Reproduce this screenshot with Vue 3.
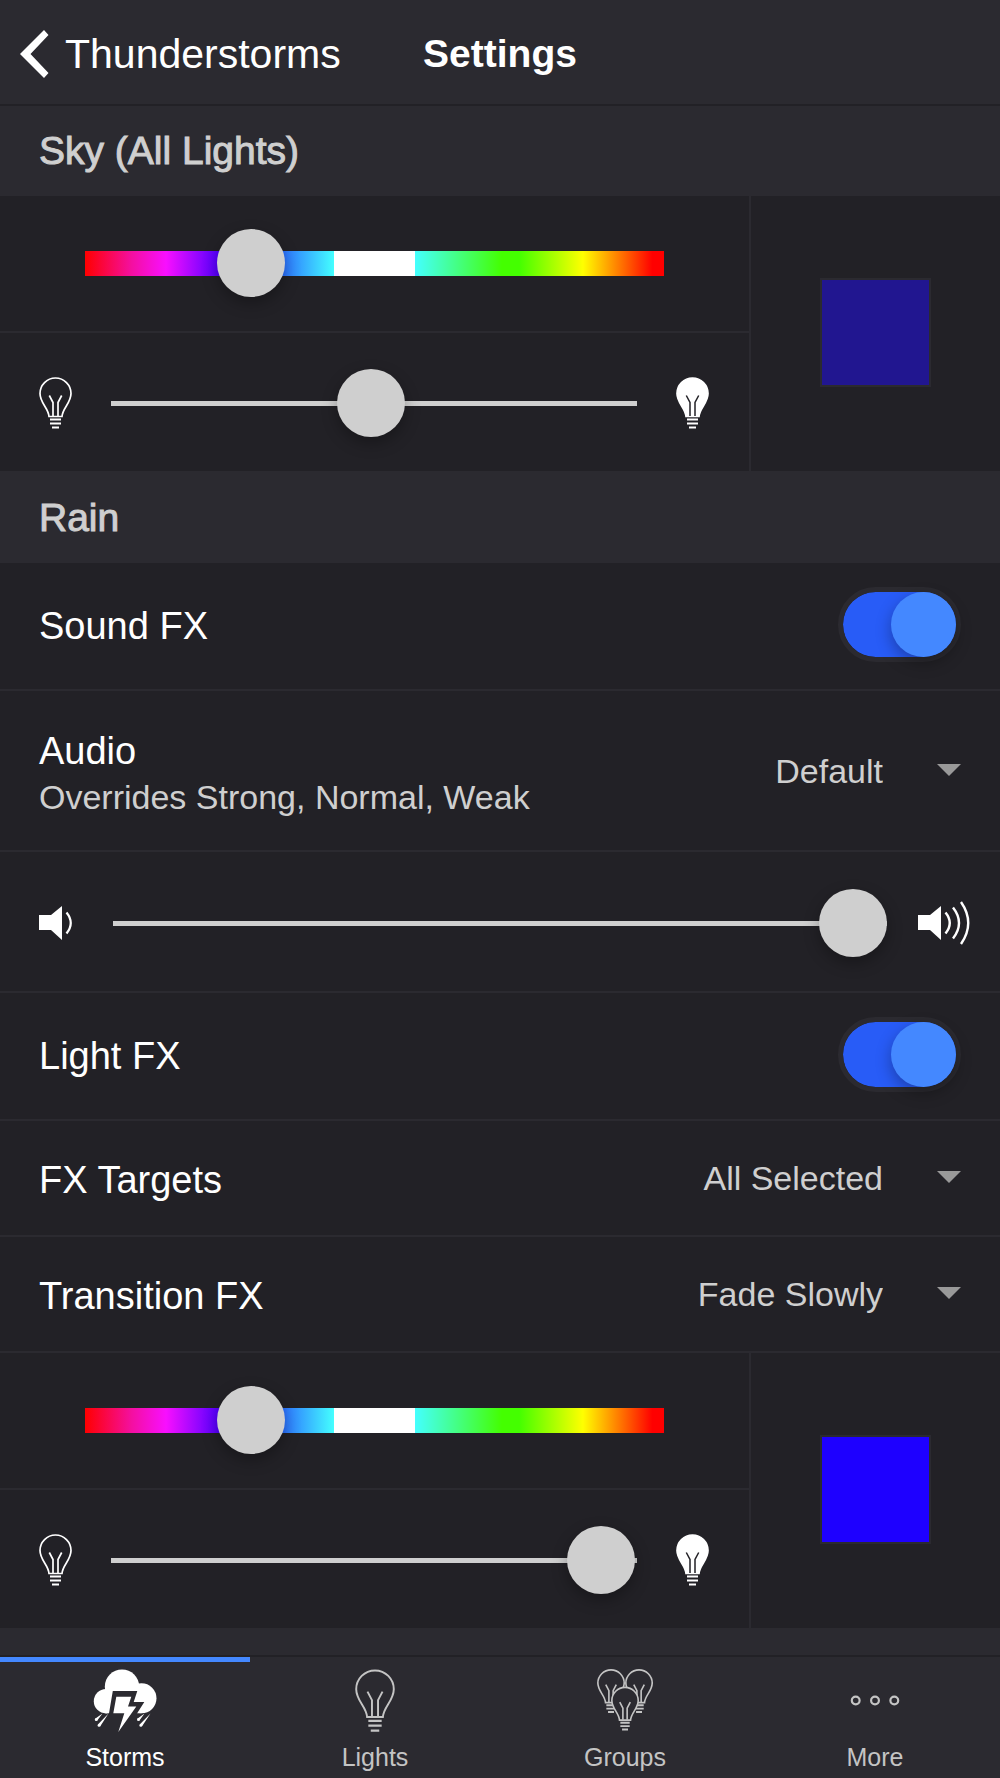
<script setup>
import { ref, reactive } from 'vue'

const BULB = 'M10 39.5C9.5 31 1 26 1 16.5A15.5 15.5 0 0 1 32 16.5C32 26 23.5 31 23 39.5Z'
const FILAMENT = 'M10.3 18.5L14 25.5V39M22.7 18.5L19 25.5V39'
const BASE = 'M11 42.6H22M11 46.6H22M13 50.6H20'

const sky = reactive({ hue: 25.8, level: 49.5, color: '#211690' })
const rain = reactive({ hue: 25.8, level: 99.6, color: '#1e00ff' })
const soundOn = ref(true)
const lightOn = ref(true)
const volume = ref(100)
const audio = ref('Default')
const targets = ref('All Selected')
const transition = ref('Fade Slowly')
const tab = ref('Storms')
const tabs = ['Storms', 'Lights', 'Groups', 'More']
</script>

<template>
  <div class="screen">
    <header class="bar">
      <button class="back" type="button">
        <svg width="29" height="48" viewBox="0 0 29 48" aria-hidden="true">
          <path d="M24 0L28.5 5L10.5 24L28.5 43L24 48L0 24Z" fill="#fff" />
        </svg>
        <span>Thunderstorms</span>
      </button>
      <h1>Settings</h1>
    </header>

    <main class="content">
      <h2 class="section">Sky (All Lights)</h2>
      <section class="panel">
        <div class="panel-controls">
          <div class="hue-row">
            <input v-model="sky.hue" class="slider hue" type="range" step="any" aria-label="Sky color" />
          </div>
          <div class="level-row">
            <svg class="bulb" viewBox="0 0 33 52" aria-hidden="true">
              <g fill="none" stroke="#fff" stroke-width="1.7">
                <path :d="BULB" /><path :d="FILAMENT" /><path :d="BASE" stroke-width="2" />
              </g>
            </svg>
            <input v-model="sky.level" class="slider" type="range" step="any" aria-label="Sky brightness" />
            <svg class="bulb" viewBox="0 0 33 52" aria-hidden="true">
              <path :d="BULB" fill="#fff" stroke="#fff" stroke-width="1.7" />
              <path :d="FILAMENT" fill="none" stroke="#222126" stroke-width="1.5" />
              <path :d="BASE" fill="none" stroke="#fff" stroke-width="2" />
            </svg>
          </div>
        </div>
        <div class="panel-swatch">
          <button class="swatch" type="button" aria-label="Sky color preview" :style="{ backgroundColor: sky.color }"></button>
        </div>
      </section>

      <h2 class="section">Rain</h2>
      <div class="row tall">
        <label class="title" for="sound">Sound FX</label>
        <input id="sound" v-model="soundOn" class="toggle" type="checkbox" />
      </div>
      <div class="row double">
        <label class="labels" for="audio">
          <span class="title">Audio</span>
          <span class="subtitle">Overrides Strong, Normal, Weak</span>
        </label>
        <div class="picker">
          <select id="audio" v-model="audio"><option>Default</option></select>
        </div>
      </div>
      <div class="row volume">
        <svg class="quiet" width="34" height="44" viewBox="0 0 34 44" aria-hidden="true">
          <path d="M0 14H12L23 5V39L12 29H0Z" fill="#fff" />
          <path d="M27.5 11.5Q36 22 27.5 32.5" fill="none" stroke="#fff" stroke-width="2.2" />
        </svg>
        <input v-model="volume" class="slider" type="range" step="any" aria-label="Volume" />
        <svg class="loud" width="52" height="44" viewBox="0 0 52 44" aria-hidden="true">
          <path d="M0 14H12L23 5V39L12 29H0Z" fill="#fff" />
          <path d="M27.5 11.5Q36 22 27.5 32.5M35 6.5Q47 22 35 37.5M43 1Q57.5 22 43 43" fill="none" stroke="#fff" stroke-width="2.4" />
        </svg>
      </div>
      <div class="row tall">
        <label class="title" for="light">Light FX</label>
        <input id="light" v-model="lightOn" class="toggle" type="checkbox" />
      </div>
      <div class="row">
        <label class="title" for="targets">FX Targets</label>
        <div class="picker">
          <select id="targets" v-model="targets"><option>All Selected</option></select>
        </div>
      </div>
      <div class="row">
        <label class="title" for="transition">Transition FX</label>
        <div class="picker">
          <select id="transition" v-model="transition"><option>Fade Slowly</option></select>
        </div>
      </div>
      <section class="panel">
        <div class="panel-controls">
          <div class="hue-row">
            <input v-model="rain.hue" class="slider hue" type="range" step="any" aria-label="Rain color" />
          </div>
          <div class="level-row">
            <svg class="bulb" viewBox="0 0 33 52" aria-hidden="true">
              <g fill="none" stroke="#fff" stroke-width="1.7">
                <path :d="BULB" /><path :d="FILAMENT" /><path :d="BASE" stroke-width="2" />
              </g>
            </svg>
            <input v-model="rain.level" class="slider" type="range" step="any" aria-label="Rain brightness" />
            <svg class="bulb" viewBox="0 0 33 52" aria-hidden="true">
              <path :d="BULB" fill="#fff" stroke="#fff" stroke-width="1.7" />
              <path :d="FILAMENT" fill="none" stroke="#222126" stroke-width="1.5" />
              <path :d="BASE" fill="none" stroke="#fff" stroke-width="2" />
            </svg>
          </div>
        </div>
        <div class="panel-swatch">
          <button class="swatch" type="button" aria-label="Rain color preview" :style="{ backgroundColor: rain.color }"></button>
        </div>
      </section>
      <div class="section"></div>
    </main>

    <nav class="tabs">
      <button v-for="t in tabs" :key="t" type="button" class="tab" :class="{ active: tab === t }" @click="tab = t">
        <svg v-if="t === 'Storms'" width="64" height="64" viewBox="-0.5 -1 64 64" aria-hidden="true">
          <g fill="currentColor">
            <circle cx="28.5" cy="17.7" r="17.2" />
            <circle cx="48" cy="29.3" r="15" />
            <circle cx="12.5" cy="32.2" r="12.2" />
            <path d="M12 22H48V44.3H12Z" />
          </g>
          <path d="M19.3 22H43.8L40.2 33H50.8L43.2 45H15.4Z" fill="#2b2a30" />
          <g fill="currentColor">
            <path d="M22.8 27.8H37.8L34.5 37.5H42.8L24.8 63L30.8 44.2H19.8Z" />
            <path d="M1.6 49.8L9 44.5L3.6 51.8ZM4.4 55.6L15 44.5L6.6 57.4ZM43.8 49.8L51 44.5L45.8 51.8ZM46.2 55.6L57 44.5L48.4 57.4Z" />
            <circle cx="2.7" cy="50.7" r="1.4" /><circle cx="5.5" cy="56.4" r="1.4" />
            <circle cx="44.9" cy="50.7" r="1.4" /><circle cx="47.3" cy="56.4" r="1.4" />
          </g>
        </svg>
        <svg v-else-if="t === 'Lights'" width="40" height="64" viewBox="0 -1 33 52.8" aria-hidden="true">
          <g fill="none" stroke="currentColor" stroke-width="1.6">
            <path :d="BULB" /><path :d="FILAMENT" /><path :d="BASE" stroke-width="1.8" />
          </g>
        </svg>
        <svg v-else-if="t === 'Groups'" width="56" height="64" viewBox="0 0 56 64" aria-hidden="true">
          <g v-for="p in [[0, 1], [28, 1], [14, 18.5]]" :key="p[0]" :transform="`translate(${p[0]} ${p[1]}) scale(.85)`" stroke="currentColor" stroke-width="1.9">
            <path :d="BULB" fill="#2b2a30" /><path :d="FILAMENT" fill="none" /><path :d="BASE" stroke-width="2.2" />
          </g>
        </svg>
        <svg v-else width="50" height="64" viewBox="0 0 50 64" aria-hidden="true">
          <g fill="none" stroke="currentColor" stroke-width="2.2">
            <circle cx="5.7" cy="32.5" r="3.9" /><circle cx="25" cy="32.5" r="3.9" /><circle cx="44.3" cy="32.5" r="3.9" />
          </g>
        </svg>
        <span>{{ t }}</span>
      </button>
    </nav>
  </div>
</template>

<style>
body {
  background: #222126;
}
</style>

<style scoped>
.screen {
  display: flex;
  flex-direction: column;
  height: 100vh;
  background: #222126;
  color: #fff;
  font-family: "Liberation Sans", Arial, sans-serif;
}
.screen *,
.screen *::before {
  box-sizing: border-box;
}
button,
select {
  border: 0;
  padding: 0;
  background: none;
  color: inherit;
  font: inherit;
}
input {
  margin: 0;
  appearance: none;
}
.bar {
  position: relative;
  flex: none;
  display: grid;
  grid-template-columns: 1fr auto 1fr;
  align-items: center;
  height: 106px;
  padding: 4px 20px 0;
  border-bottom: 2px solid #222126;
  background: #2b2a30;
}
.bar h1 {
  margin: 0;
  font-size: 39px;
  line-height: 44px;
}
.back {
  display: flex;
  align-items: center;
  gap: 16px;
  font-size: 41px;
  line-height: 48px;
}
.content {
  flex: 1;
  min-height: 0;
  margin-top: -2px;
  overflow-y: auto;
  scrollbar-width: none;
}
.section {
  display: flex;
  align-items: center;
  height: 92px;
  margin: 0;
  padding: 2px 39px 0;
  background: #2b2a30;
  color: #cfcfcf;
  font-size: 39px;
  font-weight: 400;
  -webkit-text-stroke: 1px #cfcfcf;
}
.panel {
  display: flex;
}
.panel-controls {
  flex: 3;
  min-width: 0;
  border-right: 2px solid #2b2a30;
}
.panel-swatch {
  flex: 1;
  display: flex;
  align-items: center;
  justify-content: center;
  padding-bottom: 2px;
}
.swatch {
  width: 111px;
  height: 109px;
  border: 2px solid #2b2a30;
}
.hue-row {
  display: flex;
  align-items: center;
  height: 137px;
  padding: 0 85px 1px;
  border-bottom: 2px solid #2b2a30;
}
.level-row {
  display: flex;
  align-items: center;
  gap: 39px;
  height: 138px;
  padding: 2px 40px 0 39px;
}
.bulb {
  flex: none;
  width: 33px;
  height: 52px;
}
.slider {
  flex: 1;
  min-width: 0;
  height: 68px;
  background: linear-gradient(#cfcfcf, #cfcfcf) 0 32px / 100% 5px no-repeat;
}
.hue {
  background: linear-gradient(90deg, #f00 0, #f40f9f 8%, #f80fff 14%, #50f 23%, #11f 30%, #2f7fff 35%, #4ff 43%, #fff 43%, #fff 57%, #4ff 57%, #4f0 72%, #4f0 75%, #ff0 86%, #f00 98%) 0 22px / 100% 25px no-repeat;
}
.slider::-webkit-slider-thumb {
  appearance: none;
  width: 68px;
  height: 68px;
  border-radius: 50%;
  background: #cfcfcf;
  box-shadow: 0 6px 16px rgba(0, 0, 0, 0.3);
}
.row {
  display: flex;
  align-items: center;
  justify-content: space-between;
  height: 116px;
  padding: 0 39px;
  border-bottom: 2px solid #2b2a30;
}
.row.tall {
  height: 128px;
  padding-bottom: 3px;
}
.row.double {
  height: 161px;
}
.row.volume {
  height: 141px;
  padding: 2px 30px 0 39px;
}
.quiet {
  flex: none;
  margin-right: 40px;
}
.loud {
  flex: none;
  margin-left: 31px;
}
.title {
  padding-top: 3px;
  font-size: 38px;
  line-height: 44px;
}
.labels {
  display: flex;
  flex-direction: column;
  padding-top: 5px;
}
.subtitle {
  color: #cfcfcf;
  font-size: 34px;
  line-height: 48px;
}
.picker {
  position: relative;
  color: #cfcfcf;
  font-size: 34px;
  line-height: 44px;
}
.picker select {
  appearance: none;
  padding-right: 78px;
  text-align-last: right;
}
.picker::after {
  content: "";
  position: absolute;
  top: 50%;
  right: 0;
  margin-top: -7px;
  border: 12px solid transparent;
  border-top-color: #999;
  border-bottom: 0;
  pointer-events: none;
}
.toggle {
  display: flex;
  width: 123px;
  height: 75px;
  border: 5px solid #2b2a30;
  border-radius: 38px;
  background: #2b2a30;
}
.toggle::before {
  content: "";
  width: 65px;
  height: 65px;
  border-radius: 50%;
  background: #cfcfcf;
  box-shadow: 0 6px 16px rgba(0, 0, 0, 0.3);
}
.toggle:checked {
  background: #285cf7 padding-box;
}
.toggle:checked::before {
  margin-left: auto;
  background: #48f;
}
.tabs {
  flex: none;
  display: flex;
  height: 123px;
  border-top: 2px solid #222126;
  background: #2b2a30;
}
.tab {
  flex: 1;
  display: flex;
  flex-direction: column;
  align-items: center;
  gap: 10px;
  padding-top: 6px;
  border-top: 5px solid transparent;
  color: #c4c4c4;
  font-size: 25px;
  line-height: 30px;
}
.tab svg {
  flex: none;
}
.tab.active {
  border-top-color: #48f;
  color: #fff;
}
</style>
